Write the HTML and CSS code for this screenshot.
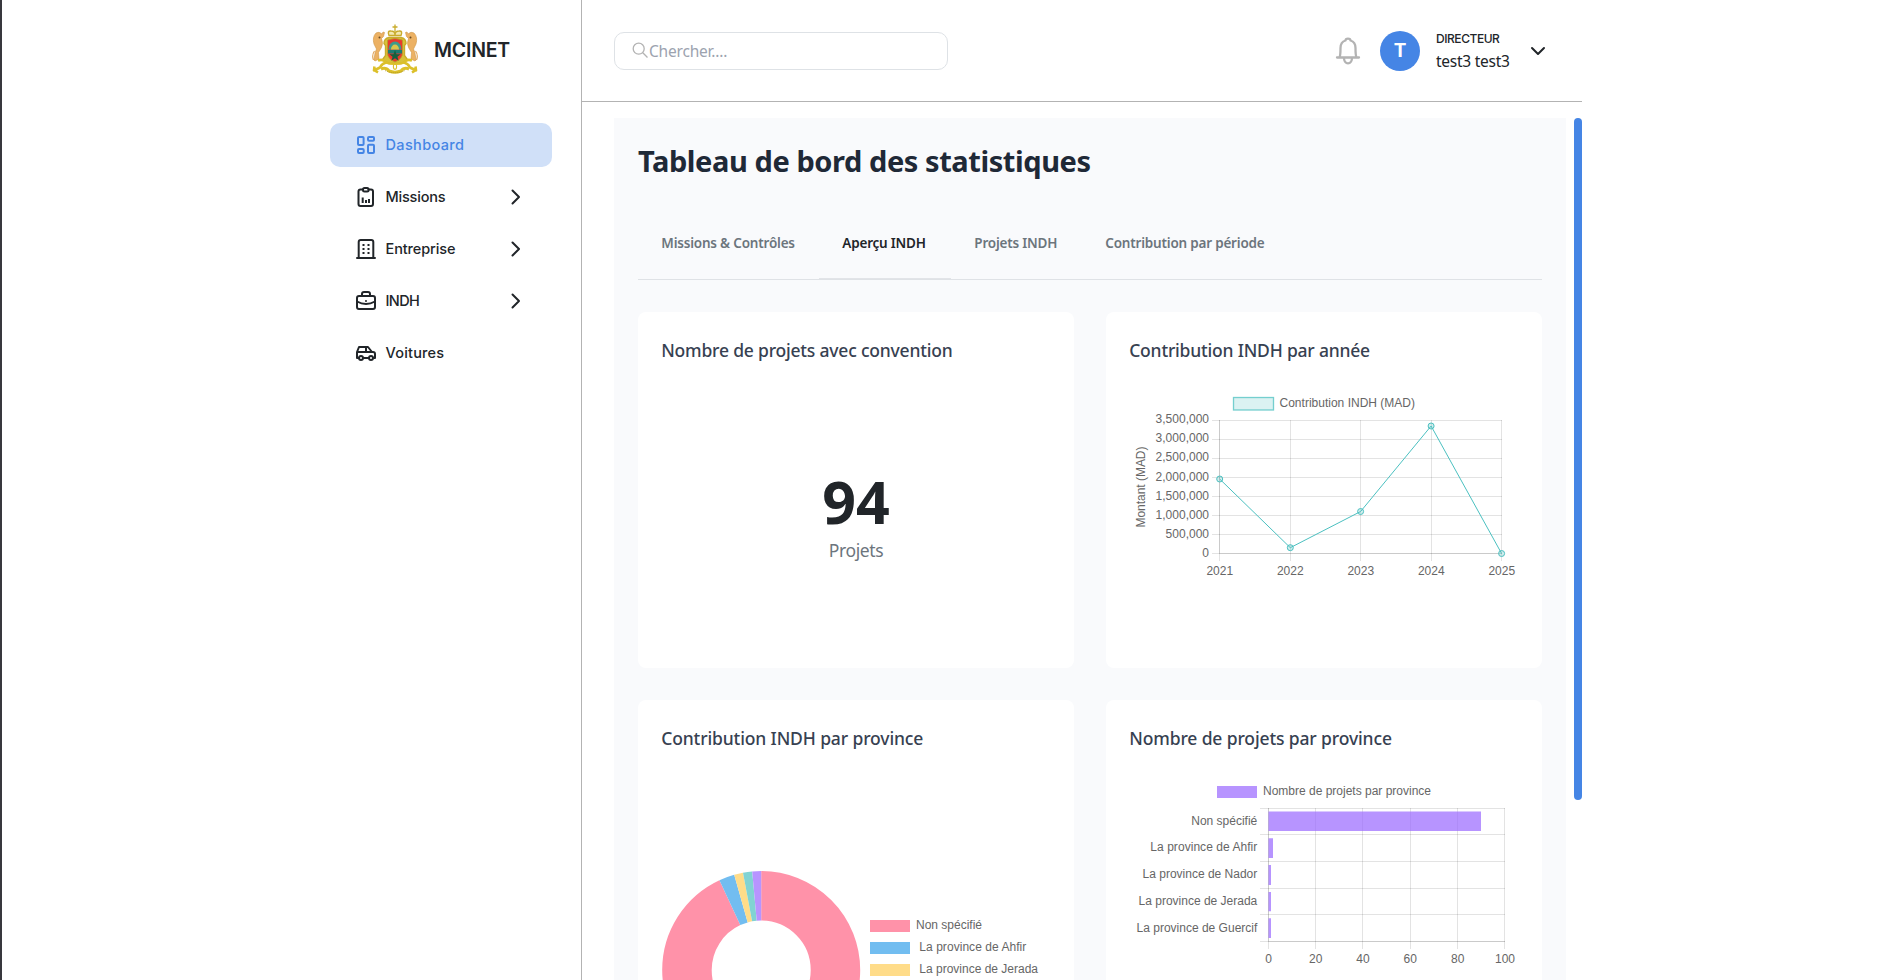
FILE: index.html
```html
<!DOCTYPE html>
<html lang="fr">
<head>
<meta charset="utf-8">
<title>MCINET</title>
<link rel="stylesheet" href="styles.css">
</head>
<body>
<div class="app">
  <aside class="sidebar">
    <div class="brand">
      <svg class="emblem" width="48" height="52" viewBox="0 0 48 52" fill="none">
        <g stroke="#c9ac2c" stroke-width="1.400">
          <path d="M24 .5v8M21.500 3h5" stroke-width="1.300"/>
          <path d="M18 11.500q-2-5 2-4.500q4 0 4 4q0-4 4-4q4-.5 2 4.500z" fill="#f3e9b0"/>
          <path d="M18 13.500h12q5 1 5 6l-1.500 2v10l3 4-6 4H17.500l-6-4 3-4v-10L13 19.500q0-5 5-6z" fill="#d8c23a"/>
        </g>
        <g fill="#ecb163" stroke="#cf9748" stroke-width=".6">
          <path d="M5 9q3-2 6 1l1-2 1.500.5-1 4-2 2q2 5 0 9l-3 5 .5 6.500-4 2-1-1 1-7 1.500-4-2.500-5q-2-7 2-11z"/>
          <path d="M43 9q-3-2-6 1l-1-2-1.500.5 1 4 2 2q-2 5 0 9l3 5-.5 6.500 4 2 1-1-1-7-1.500-4 2.500-5q2-7-2-11z"/>
        </g>
        <path d="M2.500 36q-2-5 1-9M45.500 36q2-5-1-9" stroke="#e0a55a" stroke-width="1.200"/>
        <circle cx="8.500" cy="13.500" r="1" fill="#6b4a22"/><circle cx="39.500" cy="13.500" r="1" fill="#6b4a22"/>
        <path d="M16.500 16q7.500-3 15 0v13q0 6-7.500 9q-7.500-3-7.500-9z" fill="#e8392e" stroke="#b79d2c" stroke-width=".8"/>
        <path d="M17.500 25.500a6.500 8 0 0 1 13 0z" fill="#3e9a8c"/>
        <path d="M20 25.500a4 5 0 0 1 8 0z" fill="#d9c54a"/>
        <path d="M17 26h14v3.500H17z" fill="#1c7a72"/>
        <path d="M24 26l1.500 4.200h4.200l-3.300 2.500 1.200 4L24 34.300l-3.600 2.400 1.200-4-3.300-2.500h4.200z" fill="#14603f"/>
        <g stroke="#dcc02a" stroke-width="2.600" stroke-linejoin="round">
          <path d="M7 36.500q5-2 8 2q-4 1-6 5l-6 3 .5-4M3 46l4 2.500"/>
          <path d="M41 36.500q-5-2-8 2q4 1 6 5l6 3-.5-4M45 46l-4 2.500"/>
          <path d="M10 45q5-2 8 2q6 2.500 12 0q3-4 8-2" stroke-width="3"/>
          <path d="M14 38.500q10 3 20 0" stroke-width="2"/>
          <ellipse cx="24" cy="42.500" rx="1.600" ry="2.800" stroke-width="1.100"/>
        </g>
        <path d="M14 46.500q10 4.500 20 0" stroke="#a18c1c" stroke-width=".8" stroke-dasharray="1 1"/>
      </svg>
      <span class="brand-name">MCINET</span>
    </div>
    <nav class="nav">
      <a class="nav-item active"><svg class="ico" viewBox="0 0 24 24"><rect x="4" y="4" width="5.600" height="8" rx="1"/><rect x="14" y="4" width="6" height="3.700" rx="1"/><rect x="4" y="16" width="5.700" height="4" rx="1"/><rect x="14" y="11.700" width="6" height="8.300" rx="1"/></svg><span class="w-dash">Dashboard</span></a>
      <a class="nav-item"><svg class="ico" viewBox="0 0 24 24"><path d="M9 4.500H6.500a2 2 0 0 0-2 2V19a2 2 0 0 0 2 2h10.500a2 2 0 0 0 2-2V6.500a2 2 0 0 0-2-2h-2.500"/><rect x="9" y="3" width="5.600" height="3.400" rx="1.500"/><path d="M8.700 12.500V18M12 15v3M15 14v4" class="butt"/></svg><span class="w-miss">Missions</span><svg class="chev" viewBox="0 0 10 16"><path d="M1.500 1.500L8 8l-6.500 6.500"/></svg></a>
      <a class="nav-item"><svg class="ico" viewBox="0 0 24 24"><path d="M3 21h18M4.700 21V5a2 2 0 0 1 2-2h10.600a2 2 0 0 1 2 2v16"/><path class="butt" d="M8.500 8h2M13.500 8h2M8.500 12h2M13.500 12h2M8.500 16h2M13.500 16h2"/></svg><span class="w-ent">Entreprise</span><svg class="chev" viewBox="0 0 10 16"><path d="M1.500 1.500L8 8l-6.500 6.500"/></svg></a>
      <a class="nav-item"><svg class="ico" viewBox="0 0 24 24"><rect x="3" y="7" width="18" height="13" rx="2"/><path d="M8 7V5a2 2 0 0 1 2-2h4a2 2 0 0 1 2 2v2M12 12v.01M3 12.500q9 5 18 0"/></svg><span class="w-indh">INDH</span><svg class="chev" viewBox="0 0 10 16"><path d="M1.500 1.500L8 8l-6.500 6.500"/></svg></a>
      <a class="nav-item"><svg class="ico" viewBox="0 0 24 24"><circle cx="7" cy="17" r="2"/><circle cx="17" cy="17" r="2"/><path d="M5 17H3v-6l2-5h9l4 5h1a2 2 0 0 1 2 2v4h-2m-4 0H9M3 11h15m-6 0V6"/></svg><span class="w-voit">Voitures</span></a>
    </nav>
  </aside>
  <div class="page">
    <header class="topbar">
      <div class="search"><svg width="17" height="17" viewBox="0 0 17 17"><circle cx="6.700" cy="6.700" r="5.500"/><path d="M10.800 10.800l4.700 4.700"/></svg><span>Chercher....</span></div>
      <div class="user">
        <svg class="bell" width="26" height="28" viewBox="0 0 26 28"><path d="M2 20.500h22M4.500 20.500q1-2 1-9.500q0-6 5-7.500q0-1.800 2.500-1.800t2.500 1.800q5 1.500 5 7.500q0 7.500 1 9.500M9 21.500q.5 4.800 4 4.800t4-4.800"/></svg>
        <div class="avatar">T</div>
        <div class="who"><div class="role">DIRECTEUR</div><div class="name">test3 test3</div></div>
        <svg class="down" width="16" height="10" viewBox="0 0 16 10"><path d="M2 2l6 6 6-6"/></svg>
      </div>
    </header>
    <div class="scroller">
      <main class="panel">
        <h1>Tableau de bord des statistiques</h1>
        <div class="tabs">
          <div class="tab t1"><span>Missions &amp; Contrôles</span></div>
          <div class="tab t2 on"><span>Aperçu INDH</span></div>
          <div class="tab t3"><span>Projets INDH</span></div>
          <div class="tab t4"><span>Contribution par période</span></div>
        </div>
        <div class="cards">
          <section class="card">
            <h2 class="c1">Nombre de projets avec convention</h2>
            <div class="stat"><div class="num">94</div><div class="unit">Projets</div></div>
          </section>
          <section class="card">
            <h2 class="c1">Contribution INDH par année</h2>
            <svg class="chart" width="400" height="200" viewBox="1130 388 400 200">
              <rect x="1233.500" y="397.500" width="40" height="12.500" fill="#4bc0c0" fill-opacity=".2" stroke="#4bc0c0" stroke-opacity=".75" stroke-width="1.300"/>
              <text x="1279.500" y="407" textLength="135.500">Contribution INDH (MAD)</text>
              <path class="grid" d="M1212 420.500H1502M1212 439.500H1502M1212 458.500H1502M1212 477.500H1502M1212 496.500H1502M1212 515.500H1502M1212 534.500H1502M1212 553.500H1502M1219.500 420V561M1290.500 420V561M1360.500 420V561M1431.500 420V561M1501.500 420V561"/>
              <path class="grid" d="M1219.500 420V553.500H1502"/>
              <g text-anchor="end">
                <text x="1209" y="423">3,500,000</text><text x="1209" y="442">3,000,000</text><text x="1209" y="461">2,500,000</text><text x="1209" y="481">2,000,000</text><text x="1209" y="500">1,500,000</text><text x="1209" y="519">1,000,000</text><text x="1209" y="538">500,000</text><text x="1209" y="557">0</text>
              </g>
              <g text-anchor="middle">
                <text x="1219.800" y="575">2021</text><text x="1290.300" y="575">2022</text><text x="1360.800" y="575">2023</text><text x="1431.300" y="575">2024</text><text x="1501.800" y="575">2025</text>
                <text transform="translate(1145 487) rotate(-90)" textLength="81">Montant (MAD)</text>
              </g>
              <g fill="#4bc0c0" fill-opacity=".25" stroke="#4bc0c0">
                <path fill="none" d="M1219.700 479L1290.300 547.700L1360.600 511.500L1431.100 426L1501.600 553.500"/>
                <circle cx="1219.700" cy="479" r="3"/><circle cx="1290.300" cy="547.700" r="3"/><circle cx="1360.600" cy="511.500" r="3"/><circle cx="1431.100" cy="426" r="3"/><circle cx="1501.600" cy="553.500" r="3"/>
              </g>
            </svg>
          </section>
          <section class="card">
            <h2 class="c2">Contribution INDH par province</h2>
            <svg class="chart" width="400" height="256" viewBox="662 776 400 256">
              <g fill="none" stroke-width="49.500" transform="rotate(-90 761.200 970)">
                <circle class="arc" stroke="#ff92a9" cx="761.200" cy="970" r="74.250" pathLength="360" stroke-dasharray="335 25"/>
                <circle class="arc" stroke="#72bdf0" cx="761.200" cy="970" r="74.250" pathLength="360" stroke-dasharray="9.100 350.900" stroke-dashoffset="-335"/>
                <circle class="arc" stroke="#ffdc89" cx="761.200" cy="970" r="74.250" pathLength="360" stroke-dasharray="5.300 354.700" stroke-dashoffset="-344.100"/>
                <circle class="arc" stroke="#81d3d3" cx="761.200" cy="970" r="74.250" pathLength="360" stroke-dasharray="5.300 354.700" stroke-dashoffset="-349.400"/>
                <circle class="arc" stroke="#b794ff" cx="761.200" cy="970" r="74.250" pathLength="360" stroke-dasharray="5.300 354.700" stroke-dashoffset="-354.700"/>
              </g>
              <rect x="870" y="920" width="40" height="12" fill="#ff92a9"/><rect x="870" y="942" width="40" height="12" fill="#72bdf0"/><rect x="870" y="964" width="40" height="12" fill="#ffdc89"/>
              <text x="916" y="929">Non spécifié</text><text x="919.300" y="951" textLength="107">La province de Ahfir</text><text x="919.300" y="973">La province de Jerada</text>
            </svg>
          </section>
          <section class="card">
            <h2 class="c2">Nombre de projets par province</h2>
            <svg class="chart" width="400" height="200" viewBox="1130 776 400 200">
              <rect x="1217" y="786" width="40" height="12" fill="#b794ff"/>
              <text x="1263" y="795" textLength="168">Nombre de projets par province</text>
              <path class="grid" d="M1260 808.500H1505M1260 834.500H1505M1260 861.500H1505M1260 888.500H1505M1260 914.500H1505M1260 941.500H1505M1268.500 808V949M1315.500 808V949M1362.500 808V949M1410.500 808V949M1457.500 808V949M1504.500 808V949"/>
              <path class="grid" d="M1268.500 808V941.500H1505"/>
              <path fill="#9966ff" fill-opacity=".7" d="M1268.500 811.500H1481V831H1268.500zM1268.500 838.200H1273V858H1268.500zM1268.500 865H1271V885H1268.500zM1268.500 892H1271V911.300H1268.500zM1268.500 918.200H1271V938H1268.500z"/>
              <g text-anchor="end">
                <text x="1257.300" y="825">Non spécifié</text><text x="1257.300" y="851" textLength="107">La province de Ahfir</text><text x="1257.300" y="878">La province de Nador</text><text x="1257.300" y="905">La province de Jerada</text><text x="1257.300" y="932">La province de Guercif</text>
              </g>
              <g text-anchor="middle">
                <text x="1268.500" y="963">0</text><text x="1315.700" y="963">20</text><text x="1363" y="963">40</text><text x="1410.300" y="963">60</text><text x="1457.700" y="963">80</text><text x="1505" y="963">100</text>
              </g>
            </svg>
          </section>
        </div>
      </main>
      <div class="thumb"></div>
    </div>
  </div>
</div>
</body>
</html>
```
FILE: styles.css
```css
* { box-sizing: border-box; }
body { margin: 0; height: 980px; overflow: hidden; background: #fff; border-left: 2px solid #38383d; font-family: "Noto Sans", sans-serif; color: #212529; }
.app { display: flex; width: 1282px; height: 980px; margin-left: 298px; }
.sidebar { width: 282px; border-right: 1px solid #b3b3b3; padding: 24px 29px 0 30px; font-family: Inter, sans-serif; flex: none; }
.brand { display: flex; align-items: center; height: 52px; padding-left: 41px; gap: 15px; }
.brand-name { font-size: 19.500px; font-weight: 600; letter-spacing: -.2px; }
.nav { margin-top: 47px; display: flex; flex-direction: column; gap: 8px; }
.nav-item { display: flex; align-items: center; gap: 8px; height: 44px; border-radius: 10px; padding: 0 31px 0 24px; font-size: 14.500px; font-weight: 500; white-space: nowrap; }
.nav-item span { padding-bottom: 2px; margin-left: -.5px; }
.active { background: #d0e0f8; color: #4585e5; }
.ico { width: 24px; height: 24px; flex: none; }
.ico, .chev { fill: none; stroke: currentColor; stroke-width: 2; stroke-linecap: round; stroke-linejoin: round; }
.ico .butt { stroke-linecap: butt; }
.chev { width: 10px; height: 16px; margin-left: auto; }
.w-dash { letter-spacing: .35px; }
.w-miss { letter-spacing: -.2px; }
.w-ent { letter-spacing: -.1px; }
.w-indh { letter-spacing: -.6px; }
.w-voit { letter-spacing: .2px; }
.page { flex: 1; min-width: 0; }
.topbar { height: 102px; border-bottom: 1px solid #b3b3b3; padding: 0 36px 0 32px; display: flex; align-items: center; justify-content: space-between; }
.search { width: 334px; height: 38px; border: 1px solid #dee2e6; border-radius: 10px; padding-left: 17px; display: flex; align-items: center; color: #9ca3af; font-size: 15.500px; letter-spacing: -.2px; }
.search svg { fill: none; stroke: #b3b3b3; stroke-width: 1.300; flex: none; }
.user { display: flex; align-items: center; }
.bell { fill: none; stroke: #b3b3b3; stroke-width: 2.300; stroke-linejoin: round; stroke-linecap: round; margin-right: 19px; }
.avatar { width: 40px; height: 40px; border-radius: 50%; background: #4585e5; color: #fff; font: 700 19px/40px Inter, sans-serif; text-align: center; }
.who { width: 94px; margin-left: 16px; }
.role { font: 500 12px/18px Inter, sans-serif; letter-spacing: -.45px; padding-top: 1px; }
.name { font-size: 15.500px; line-height: 24px; margin-top: 1px; letter-spacing: -.25px; white-space: nowrap; }
.down { fill: none; stroke: #212529; stroke-width: 2; stroke-linecap: round; stroke-linejoin: round; }
.scroller { padding: 16px 0 0 32px; height: 878px; display: flex; gap: 8px; }
.panel { width: 952px; height: 862px; overflow: hidden; background: #f9fafc; padding: 23px 24px 24px; }
.thumb { width: 8px; height: 682px; border-radius: 4px; background: #4585e5; }
h1 { margin: 0; font-size: 29px; line-height: 40px; font-weight: 700; color: #1f2937; letter-spacing: -.42px; white-space: nowrap; }
.tabs { margin-top: 27px; height: 72px; display: flex; border-bottom: 1px solid #dfe2e6; }
.tab { display: flex; align-items: center; padding: 0 23px 2px 24px; height: 71px; font-size: 13.500px; letter-spacing: -.2px; font-weight: 600; color: #6c757d; white-space: nowrap; }
.t1 { width: 181px; } .t2 { width: 132px; } .t3 { width: 131px; } .t4 { width: 208px; }
.tab span { margin-left: -.7px; }
.on { color: #212529; border-bottom: 1px solid #e2e4e8; padding-bottom: 1px; }
.cards { margin-top: 32px; display: grid; grid-template-columns: 436px 436px; gap: 32px; grid-auto-rows: 356px; }
.card { background: #fff; border-radius: 8px; padding: 24px; overflow: hidden; }
h2 { margin: 0 0 24px -.8px; font-size: 17.500px; line-height: 28px; font-weight: 500; color: #374151; white-space: nowrap; }
.c1 { letter-spacing: -.2px; }
.c2 { letter-spacing: -.13px; }
.stat { height: 256px; display: flex; flex-direction: column; align-items: center; justify-content: center; }
.num { font-size: 59px; line-height: 60px; font-weight: 700; margin-top: 2px; }
.unit { font-size: 17.500px; line-height: 28px; color: #6c757d; margin-top: 5px; letter-spacing: -.4px; }
.chart { display: block; font-family: "Liberation Sans", Arial, sans-serif; font-size: 12px; fill: #666; }
.grid { stroke: #000; stroke-opacity: .11; fill: none; }
```
